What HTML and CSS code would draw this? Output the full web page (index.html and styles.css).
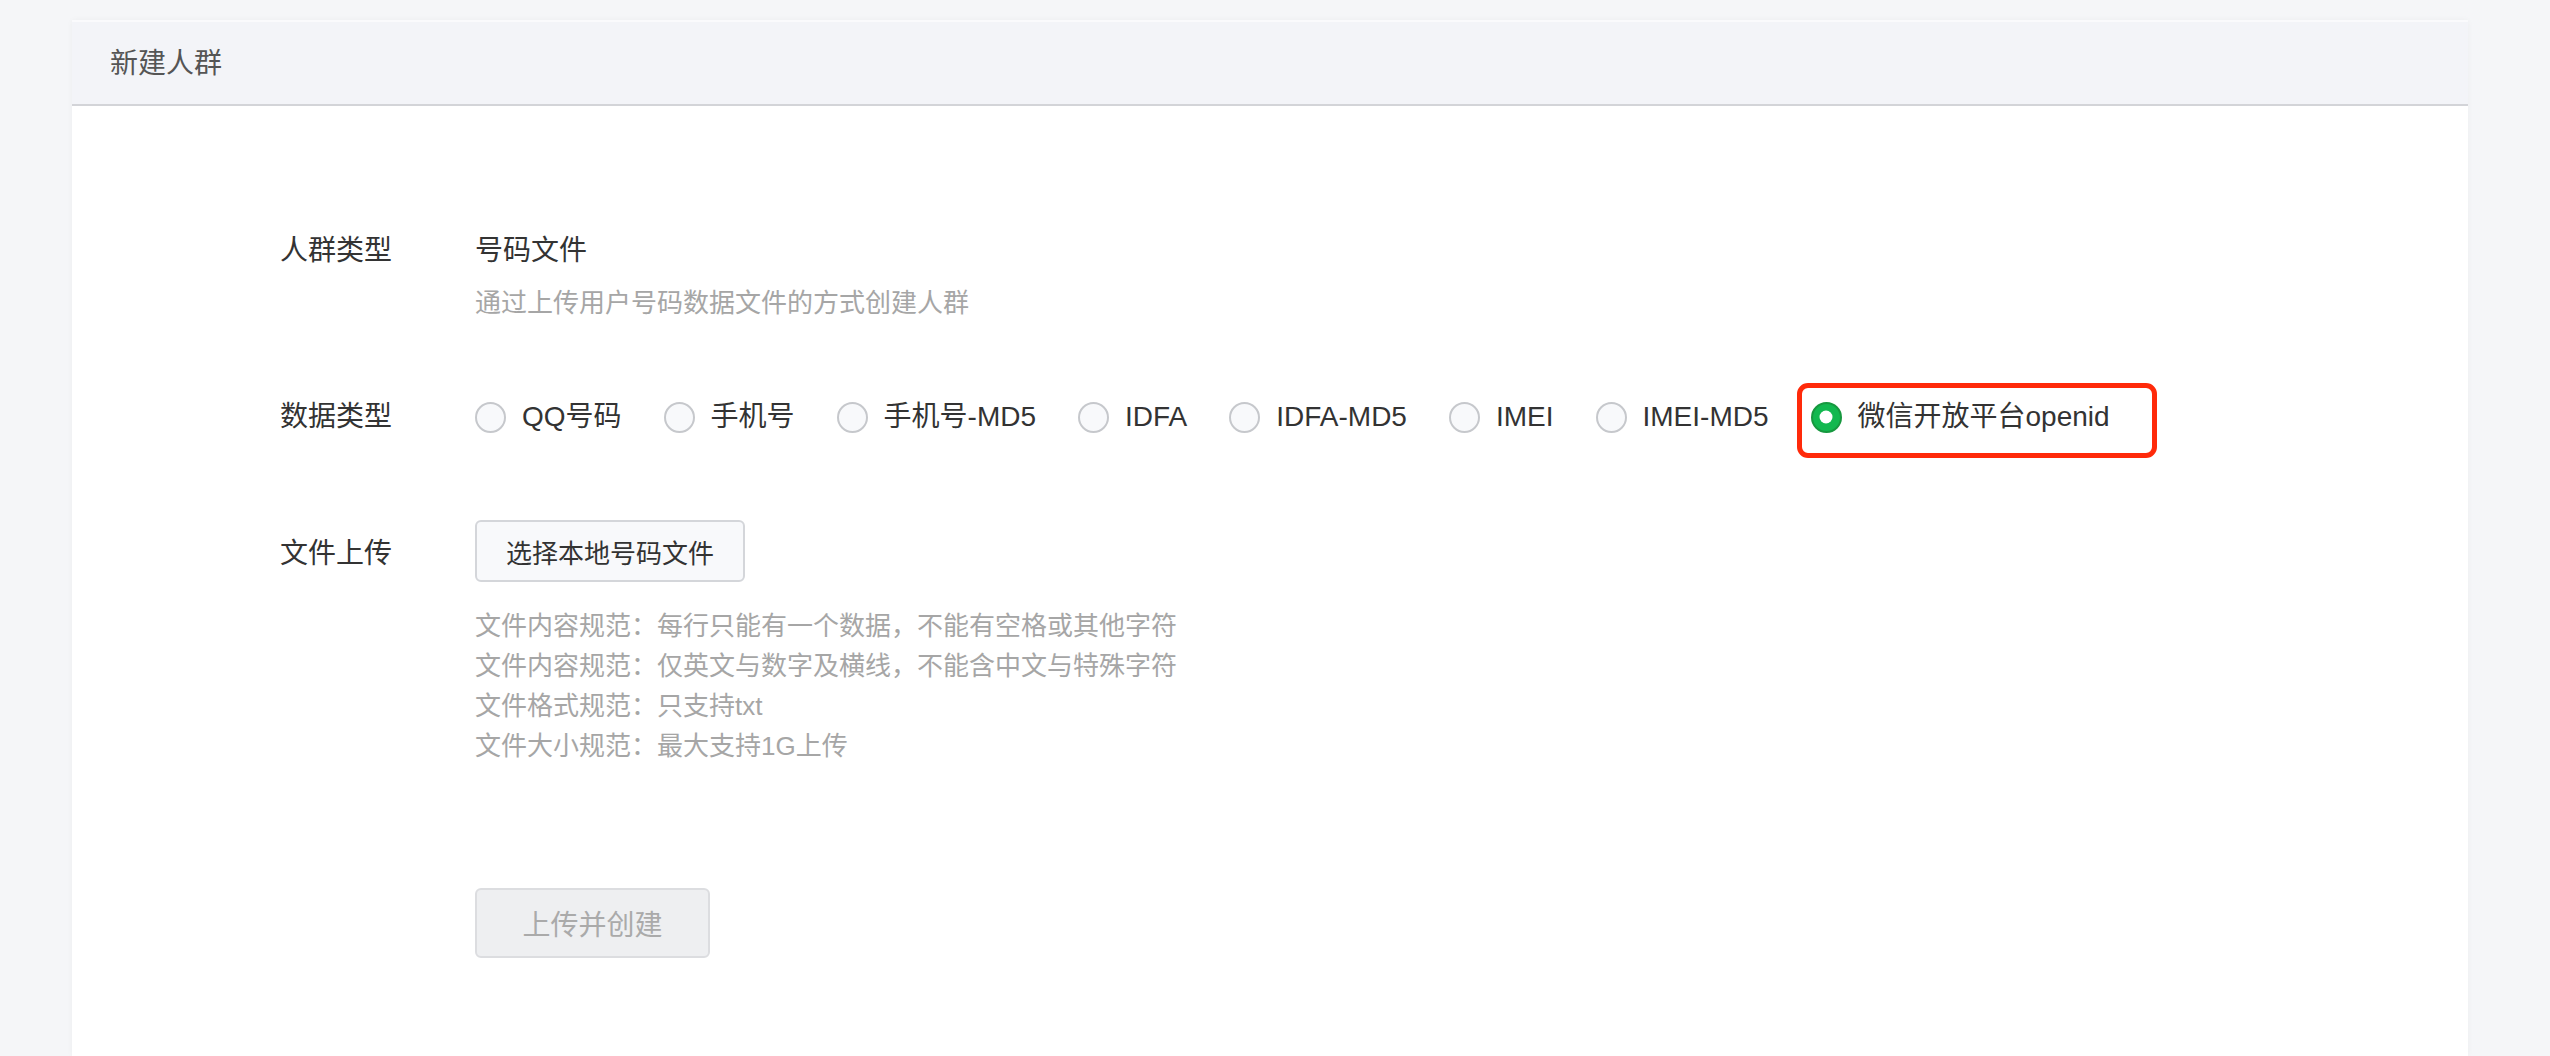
FILE: index.html
```html
<!DOCTYPE html>
<html lang="zh-CN">

<head>
  <meta charset="UTF-8">
  <meta name="viewport" content="width=device-width, initial-scale=1.0">
  <title>新建人群</title>
  <link rel="stylesheet" href="styles.css">
</head>

<body>
  <!-- 卡片 -->
  <div class="panel">
    <!-- 卡片标题 -->
    <div class="panel-header">新建人群</div>

    <!-- 表单区域 -->
    <div class="panel-body">
      <!-- 人群类型 -->
      <div class="form-row row-type">
        <span class="form-label">人群类型</span>
        <div class="form-control">
          <p class="type-value">号码文件</p>
          <p class="type-desc">通过上传用户号码数据文件的方式创建人群</p>
        </div>
      </div>

      <!-- 数据类型 -->
      <div class="form-row row-data">
        <span class="form-label">数据类型</span>
        <div class="radio-group">
          <label class="radio-item"><span class="radio"></span>QQ号码</label>
          <label class="radio-item"><span class="radio"></span>手机号</label>
          <label class="radio-item"><span class="radio"></span>手机号-MD5</label>
          <label class="radio-item"><span class="radio"></span>IDFA</label>
          <label class="radio-item"><span class="radio"></span>IDFA-MD5</label>
          <label class="radio-item"><span class="radio"></span>IMEI</label>
          <label class="radio-item"><span class="radio"></span>IMEI-MD5</label>
          <label class="radio-item">
            <span class="radio radio-checked"></span>微信开放平台openid
            <!-- 红框标注 -->
            <span class="mark-box"></span>
          </label>
        </div>
      </div>

      <!-- 文件上传 -->
      <div class="form-row row-upload">
        <span class="form-label">文件上传</span>
        <div class="form-control">
          <button class="btn-select">选择本地号码文件</button>
          <ul class="upload-tips">
            <li>文件内容规范：每行只能有一个数据，不能有空格或其他字符</li>
            <li>文件内容规范：仅英文与数字及横线，不能含中文与特殊字符</li>
            <li>文件格式规范：只支持txt</li>
            <li>文件大小规范：最大支持1G上传</li>
          </ul>
        </div>
      </div>

      <!-- 提交按钮 -->
      <div class="form-footer">
        <button class="btn-submit" disabled>上传并创建</button>
      </div>
    </div>
  </div>
</body>

</html>
```

FILE: styles.css
```css
/* 全局重置 */
* {
  margin: 0;
  padding: 0;
  box-sizing: border-box;
}

body {
  background: #f5f6f8;
  font-family: "Liberation Sans", "Noto Sans CJK SC", sans-serif;
  color: #333;
  padding: 20px 82px 0 72px;
  min-height: 100vh;
}

/* 卡片 */
.panel {
  background: #fff;
  min-height: 1036px;
  box-shadow: 0 0 6px rgba(0, 0, 0, 0.04);
}

/* 卡片标题栏 */
.panel-header {
  height: 86px;
  line-height: 84px;
  padding-left: 38px;
  background: #f3f4f8;
  border-top: 2px solid #fafafc;
  border-bottom: 2px solid #d3d4d8;
  font-size: 28px;
  color: #555;
}

.panel-body {
  padding: 125px 0 0 208px;
}

/* 表单行 */
.form-row {
  display: flex;
  align-items: flex-start;
}

.form-label {
  width: 195px;
  flex-shrink: 0;
  font-size: 28px;
  line-height: 40px;
  color: #333;
}

.type-value {
  font-size: 28px;
  line-height: 40px;
  color: #333;
}

.type-desc {
  margin-top: 12px;
  font-size: 26px;
  line-height: 40px;
  color: #a6a6a6;
}

/* 数据类型 */
.row-data {
  margin-top: 74px;
}

.radio-group {
  display: flex;
  align-items: center;
  gap: 42px;
}

.radio-item {
  position: relative;
  display: flex;
  align-items: center;
  gap: 16px;
  font-size: 28px;
  line-height: 40px;
  color: #333;
}

/* 单选圆圈 */
.radio {
  width: 31px;
  height: 31px;
  border-radius: 50%;
  border: 2px solid #c6c8cc;
  background: #f8f9fb;
  position: relative;
}

.radio-checked {
  background: #12b84f;
  border-color: #17983f;
}

.radio-checked::after {
  content: "";
  position: absolute;
  top: 50%;
  left: 50%;
  width: 13px;
  height: 13px;
  border-radius: 50%;
  background: #fff;
  transform: translate(-50%, -50%);
}

/* 红框标注 */
.mark-box {
  position: absolute;
  top: -14px;
  bottom: -21px;
  left: -14px;
  right: -47px;
  border: 5px solid #ff2a0a;
  border-radius: 11px;
}

/* 文件上传 */
.row-upload {
  margin-top: 83px;
}

.row-upload .form-label {
  line-height: 62px;
  padding-top: 3px;
}

.btn-select {
  height: 62px;
  padding: 0 29px;
  font-family: inherit;
  font-size: 26px;
  color: #333;
  background: #f8f9fb;
  border: 2px solid #d4d6da;
  border-radius: 6px;
}

.upload-tips {
  list-style: none;
  margin-top: 24px;
}

.upload-tips li {
  font-size: 26px;
  line-height: 40px;
  color: #a6a6a6;
}

/* 提交按钮 */
.form-footer {
  margin-top: 122px;
  padding-left: 195px;
}

.btn-submit {
  width: 235px;
  height: 70px;
  font-family: inherit;
  font-size: 28px;
  color: #aaa;
  background: #eeeff1;
  border: 2px solid #dcdde0;
  border-radius: 6px;
}
```
